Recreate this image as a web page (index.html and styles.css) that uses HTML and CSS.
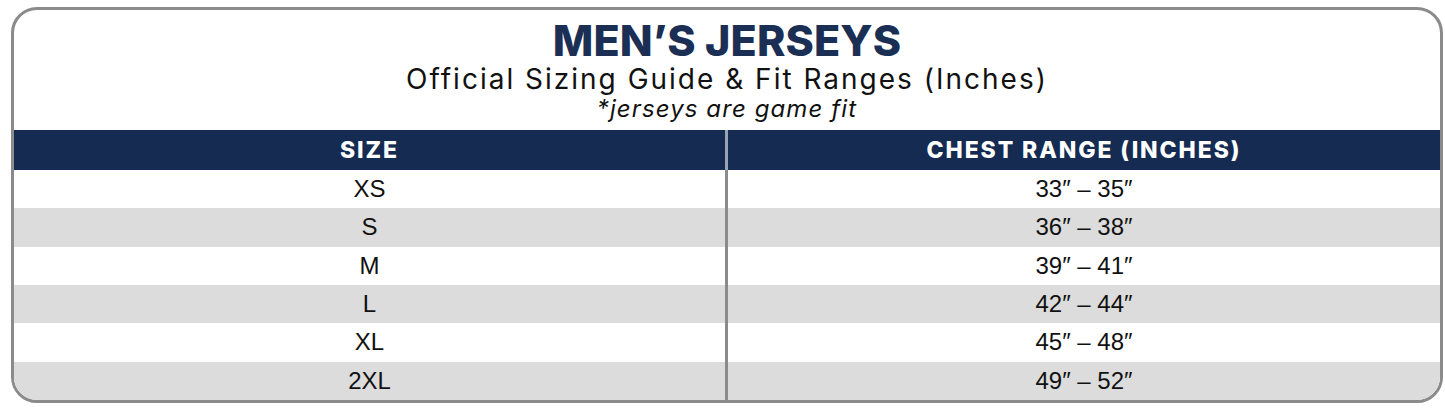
FILE: index.html
```html
<!DOCTYPE html>
<html lang="en">
<head>
<meta charset="utf-8">
<title>Men's Jerseys Sizing</title>
<link rel="stylesheet" href="styles.css">
</head>
<body>
<div class="card">
  <header class="head">
    <h1 class="title">MEN’S JERSEYS</h1>
    <p class="subtitle">Official Sizing Guide &amp; Fit Ranges (Inches)</p>
    <p class="note">*jerseys are game fit</p>
  </header>
  <div class="table">
    <div class="row th"><div class="cell">SIZE</div><div class="cell">CHEST RANGE (INCHES)</div></div>
    <div class="row"><div class="cell">XS</div><div class="cell">33″ – 35″</div></div>
    <div class="row alt"><div class="cell">S</div><div class="cell">36″ – 38″</div></div>
    <div class="row"><div class="cell">M</div><div class="cell">39″ – 41″</div></div>
    <div class="row alt"><div class="cell">L</div><div class="cell">42″ – 44″</div></div>
    <div class="row"><div class="cell">XL</div><div class="cell">45″ – 48″</div></div>
    <div class="row alt"><div class="cell">2XL</div><div class="cell">49″ – 52″</div></div>
  </div>
</div>
</body>
</html>
```

FILE: styles.css
```css
html, body {
  margin: 0;
  padding: 0;
  background: #ffffff;
}
body {
  padding: 7px 2px 0 11px;
  font-family: "Inter", "Liberation Sans", sans-serif;
}
.card {
  width: 1432px;
  height: 396px;
  box-sizing: border-box;
  border: 3px solid #8b8b8b;
  border-radius: 26px;
  overflow: hidden;
  display: flex;
  flex-direction: column;
  background: #ffffff;
}
.head {
  height: 120px;
  display: flex;
  flex-direction: column;
  align-items: center;
}
.title {
  margin: 7px 0 0;
  font-size: 43px;
  line-height: 46px;
  font-weight: 800;
  color: #1b2f55;
  letter-spacing: 0.1px;
}
.subtitle {
  margin: 0;
  font-size: 28px;
  line-height: 32px;
  font-weight: 400;
  letter-spacing: 2px;
  color: #111111;
}
.note {
  margin: 0;
  font-size: 24px;
  line-height: 28px;
  font-style: italic;
  letter-spacing: 1.1px;
  color: #111111;
}
.table {
  flex: 1;
  display: grid;
  grid-template-rows: 40px repeat(6, 1fr);
}
.row {
  display: grid;
  grid-template-columns: 714px 1fr;
  background: #ffffff;
}
.row.alt {
  background: #dcdcdc;
}
.cell {
  display: flex;
  align-items: center;
  justify-content: center;
  font-family: "Liberation Sans", "Inter", sans-serif;
  font-size: 24px;
  color: #111111;
}
.cell:first-child {
  border-right: 3px solid #8b8b8b;
}
.row.th {
  background: #152b52;
}
.row.th .cell {
  font-family: "Inter", "Liberation Sans", sans-serif;
  color: #ffffff;
  font-weight: 800;
  font-size: 23px;
  letter-spacing: 1.9px;
}
.row.th .cell:first-child {
  border-right-color: #9aa3b3;
}
```
